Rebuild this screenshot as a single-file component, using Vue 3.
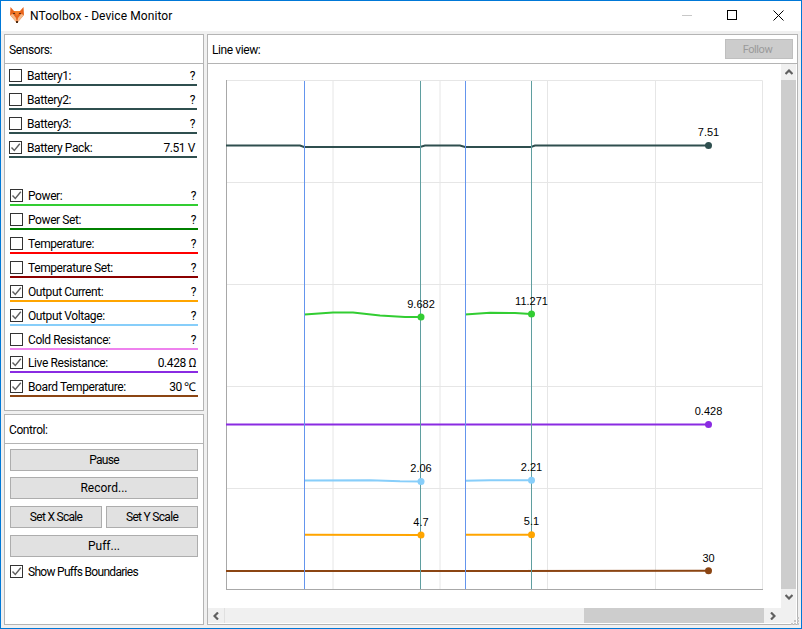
<script setup>
const groupA = [
  { name: 'Battery1:', value: '?', color: '#2f4f4f', on: false },
  { name: 'Battery2:', value: '?', color: '#2f4f4f', on: false },
  { name: 'Battery3:', value: '?', color: '#2f4f4f', on: false },
  { name: 'Battery Pack:', value: '7.51 V', color: '#2f4f4f', on: true },
]
const groupB = [
  { name: 'Power:', value: '?', color: '#32cd32', on: true },
  { name: 'Power Set:', value: '?', color: '#008000', on: false },
  { name: 'Temperature:', value: '?', color: '#ff0000', on: false },
  { name: 'Temperature Set:', value: '?', color: '#8b0000', on: false },
  { name: 'Output Current:', value: '?', color: '#ffa500', on: true },
  { name: 'Output Voltage:', value: '?', color: '#87cefa', on: true },
  { name: 'Cold Resistance:', value: '?', color: '#ee82ee', on: false },
  { name: 'Live Resistance:', value: '0.428 Ω', color: '#8a2be2', on: true, tight: true },
  { name: 'Board Temperature:', value: '30 ℃', color: '#8b4513', on: true },
]
const hGrid = [182, 284, 386, 488]
const vGrid = [333, 440, 547.5, 655.5]
const lines = [
  { c: '#2f4f4f', p: '226,145.5 300,145.5 304,147 420,147 425,145.5 460,145.5 465,147 531,147 535,145.5 708,145.5' },
  { c: '#32cd32', p: '304.5,314.5 333,312.5 353,312.5 380,315.5 405,317 421,317' },
  { c: '#32cd32', p: '465,314.5 490,312.8 515,313 531,314' },
  { c: '#8a2be2', p: '226,424.5 708,424.5' },
  { c: '#87cefa', p: '304.5,480.5 370,480.3 400,481.3 421,481.5' },
  { c: '#87cefa', p: '465,480.7 490,480.2 531,480.2' },
  { c: '#ffa500', p: '304.5,534.7 421,535' },
  { c: '#ffa500', p: '465,534.7 531,534.7' },
  { c: '#8b4513', p: '226,571 708,570.8' },
]
const points = [
  { x: 708.5, y: 145.5, c: '#2f4f4f', t: '7.51', ty: 136 },
  { x: 421, y: 317, c: '#32cd32', t: '9.682', ty: 308 },
  { x: 531.5, y: 314, c: '#32cd32', t: '11.271', ty: 305 },
  { x: 708.5, y: 424.5, c: '#8a2be2', t: '0.428', ty: 415 },
  { x: 421, y: 481.5, c: '#87cefa', t: '2.06', ty: 472 },
  { x: 531.5, y: 480.3, c: '#87cefa', t: '2.21', ty: 471 },
  { x: 421, y: 535, c: '#ffa500', t: '4.7', ty: 526 },
  { x: 531.5, y: 534.7, c: '#ffa500', t: '5.1', ty: 525 },
  { x: 708.5, y: 570.8, c: '#8b4513', t: '30', ty: 562 },
]
</script>

<template>
  <div class="window">
    <header class="titlebar">
      <svg class="fox" width="14" height="16" viewBox="0 0 14 16">
        <polygon points="0.5,0 4,4 10,4 13.5,0 14,8 7,16 0,8" fill="#e8641b" />
        <polygon points="0,8 3,7 6,11 7,16" fill="#f4b98a" />
        <polygon points="14,8 11,7 8,11 7,16" fill="#f4b98a" />
        <polygon points="4,4 10,4 7,9" fill="#f2822c" />
        <rect x="3" y="6" width="2" height="1" fill="#5a2c10" />
        <rect x="9" y="6" width="2" height="1" fill="#5a2c10" />
        <rect x="6" y="14" width="2" height="2" fill="#4a2a12" />
      </svg>
      <span class="title">NToolbox - Device Monitor</span>
      <div class="controls">
        <span class="min"></span>
        <span class="max"></span>
        <svg class="close" width="11" height="11" viewBox="0 0 11 11">
          <path d="M0.5 0.5 L10.5 10.5 M10.5 0.5 L0.5 10.5" stroke="#000" stroke-width="1" fill="none" />
        </svg>
      </div>
    </header>

    <main class="body">
      <aside class="side">
        <section class="panel sensors">
          <div class="phead">Sensors:</div>
          <div class="group first">
            <div v-for="s in groupA" :key="s.name" class="row" :style="{ borderBottomColor: s.color }">
              <span class="box" :class="{ on: s.on }">
                <svg v-if="s.on" width="11" height="11" viewBox="0 0 11 11"><path d="M1.5 5.5 L4.3 8.5 L9.8 1.8" fill="none" stroke="#5f5f5f" stroke-width="1.4" /></svg>
              </span>
              <span class="name">{{ s.name }}</span>
              <span class="val">{{ s.value }}</span>
            </div>
          </div>
          <div class="group second">
            <div v-for="s in groupB" :key="s.name" class="row" :class="{ tight: s.tight }" :style="{ borderBottomColor: s.color }">
              <span class="box" :class="{ on: s.on }">
                <svg v-if="s.on" width="11" height="11" viewBox="0 0 11 11"><path d="M1.5 5.5 L4.3 8.5 L9.8 1.8" fill="none" stroke="#5f5f5f" stroke-width="1.4" /></svg>
              </span>
              <span class="name">{{ s.name }}</span>
              <span class="val">{{ s.value }}</span>
            </div>
          </div>
        </section>

        <section class="panel control">
          <div class="phead">Control:</div>
          <div class="ctrl">
            <button class="btn">Pause</button>
            <button class="btn dots">Record...</button>
            <div class="pair">
              <button class="btn">Set X Scale</button>
              <button class="btn">Set Y Scale</button>
            </div>
            <button class="btn dots">Puff...</button>
            <label class="show">
              <span class="box on">
                <svg width="11" height="11" viewBox="0 0 11 11"><path d="M1.5 5.5 L4.3 8.5 L9.8 1.8" fill="none" stroke="#5f5f5f" stroke-width="1.4" /></svg>
              </span>
              <span class="name">Show Puffs Boundaries</span>
            </label>
          </div>
        </section>
      </aside>

      <section class="panel view">
        <div class="phead vhead">
          <span>Line view:</span>
          <button class="follow" disabled>Follow</button>
        </div>
        <div class="scrollarea">
          <svg class="chart" width="573" height="544" viewBox="208 64 573 544">
            <rect x="226" y="80.5" width="536" height="509" fill="#fff" />
            <path d="M226 80.5 H762.5 V589" fill="none" stroke="#e6e6e6" />
            <line v-for="y in hGrid" :key="'h' + y" x1="226" x2="762" :y1="y + 0.5" :y2="y + 0.5" stroke="#e6e6e6" />
            <line v-for="x in vGrid" :key="'v' + x" :x1="x" :x2="x" y1="80" y2="589" stroke="#e6e6e6" />
            <line x1="226.5" x2="226.5" y1="80" y2="589" stroke="#a8a8a8" />
            <line x1="226" x2="763" y1="589.5" y2="589.5" stroke="#a8a8a8" />
            <polyline v-for="(l, i) in lines" :key="'l' + i" :points="l.p" fill="none" :stroke="l.c" stroke-width="2" />
            <line x1="304.5" x2="304.5" y1="81" y2="589" stroke="#6495ed" />
            <line x1="465.5" x2="465.5" y1="81" y2="589" stroke="#6495ed" />
            <line x1="420.5" x2="420.5" y1="81" y2="589" stroke="#5f9ea0" />
            <line x1="531.5" x2="531.5" y1="81" y2="589" stroke="#5f9ea0" />
            <circle v-for="p in points" :key="'c' + p.t" :cx="p.x" :cy="p.y" r="3.5" :fill="p.c" />
            <text v-for="p in points" :key="'t' + p.t" :x="p.x" :y="p.ty" class="lbl" text-anchor="middle">{{ p.t }}</text>
          </svg>
          <div class="vbar">
            <span class="sbtn"><svg width="8" height="6" viewBox="0 0 8 6"><path d="M0.5 5 L4 1.5 L7.5 5" fill="none" stroke="#606060" stroke-width="2.2" /></svg></span>
            <span class="vthumb"></span>
            <span class="sbtn low"><svg width="8" height="6" viewBox="0 0 8 6"><path d="M0.5 1 L4 4.5 L7.5 1" fill="none" stroke="#606060" stroke-width="2.2" /></svg></span>
          </div>
          <div class="hbar">
            <span class="hbtn lead"><svg width="6" height="8" viewBox="0 0 6 8"><path d="M5 0.5 L1.5 4 L5 7.5" fill="none" stroke="#606060" stroke-width="2.2" /></svg></span>
            <span class="htrack"></span>
            <span class="hthumb"></span>
            <span class="hbtn"><svg width="6" height="8" viewBox="0 0 6 8"><path d="M1 0.5 L4.5 4 L1 7.5" fill="none" stroke="#606060" stroke-width="2.2" /></svg></span>
          </div>
          <div class="corner"></div>
        </div>
      </section>
    </main>
    <svg class="grip" width="9" height="9" viewBox="0 0 9 9">
      <path d="M6 0h2v2h-2z M3 3h2v2h-2z M6 3h2v2h-2z M0 6h2v2h-2z M3 6h2v2h-2z M6 6h2v2h-2z" fill="#c4c4c4" />
    </svg>
  </div>
</template>

<style>
html, body { margin: 0; padding: 0; background: #f0f0f0; overflow: hidden; }
</style>

<style scoped>
.window {
  position: relative;
  width: 802px;
  height: 629px;
  box-sizing: border-box;
  border: 1px solid #0078d7;
  background: #f0f0f0;
  display: flex;
  flex-direction: column;
  font-family: Roboto, "Open Sans", sans-serif;
  font-size: 12px;
  color: #000;
}
.titlebar {
  height: 30px;
  flex: none;
  background: #fff;
  display: flex;
  align-items: center;
  padding-left: 9px;
}
.fox { flex: none; margin-bottom: 2px; }
.title { margin-left: 6px; font-size: 12px; letter-spacing: 0.08px; }
.controls { margin-left: auto; display: flex; align-items: center; margin-bottom: 2px; }
.min { width: 10px; height: 1px; background: #c8c8c8; margin-right: 35px; }
.max { width: 8px; height: 8px; border: 1px solid #000; margin-right: 36px; }
.close { margin-right: 17px; display: block; }
.body {
  flex: 1;
  min-height: 0;
  display: flex;
  gap: 3px;
  padding: 3px;
}
.side { width: 200px; flex: none; display: flex; flex-direction: column; gap: 3px; }
.panel { background: #fff; border: 1px solid #b4b4b4; box-sizing: border-box; }
.phead {
  height: 29px;
  box-sizing: border-box;
  border-bottom: 1px solid #b4b4b4;
  padding: 2px 0 0 4px;
  display: flex;
  align-items: center;
  letter-spacing: -0.4px;
}
.sensors { height: 377px; flex: none; }
.group.first { margin-top: -2px; padding: 0 6px 0 4px; }
.group.second { margin-top: 24px; padding: 0 5px 0 5px; }
.row {
  height: 24px;
  box-sizing: border-box;
  border-bottom: 2px solid #000;
  display: flex;
  align-items: flex-end;
  padding: 0 2px 2px 0;
  line-height: 13px;
  letter-spacing: -0.4px;
}
.row .name, .row .val { margin-bottom: -1px; }
.row.tight { margin-top: -1px; }
.box {
  width: 11px;
  height: 11px;
  border: 1px solid #333;
  background: #fff;
  flex: none;
  display: block;
}
.box svg { display: block; }
.name { margin-left: 5px; white-space: nowrap; }
.val { margin-left: auto; }
.control { flex: 1; min-height: 0; }
.ctrl { display: flex; flex-direction: column; padding: 5px 5px 0 5px; }
.btn {
  height: 22px;
  box-sizing: border-box;
  border: 1px solid #adadad;
  background: #e1e1e1;
  font: inherit;
  color: #000;
  padding: 0;
  margin-bottom: 6px;
  flex: none;
  letter-spacing: -0.7px;
}
.btn.dots { letter-spacing: 0; }
.pair { display: grid; grid-template-columns: 1fr 1fr; gap: 4px; margin: 1px 0 1px; }
.show { display: flex; align-items: center; margin-top: 1px; line-height: 13px; letter-spacing: -0.7px; }
.show .name { padding-top: 2px; }
.view { flex: 1; min-width: 0; display: flex; flex-direction: column; }
.vhead { justify-content: space-between; padding-right: 4px; flex: none; }
.follow {
  width: 68px;
  height: 20px;
  margin-top: -2px;
  box-sizing: border-box;
  border: 1px solid #bfbfbf;
  background: #cccccc;
  color: #9a9a9a;
  font: inherit;
  font-size: 11px;
  letter-spacing: -0.4px;
  padding: 0 3px 0 0;
}
.scrollarea {
  flex: 1;
  min-height: 0;
  display: grid;
  grid-template-columns: 573px 16px;
  grid-template-rows: 544px 16px;
  background: #fff;
}
.chart { display: block; }
.lbl { font-family: "Liberation Sans", Arial, sans-serif; font-size: 11px; fill: #000; }
.vbar { display: flex; flex-direction: column; background: #f0f0f0; margin-right: 1px; }
.sbtn { height: 16px; flex: none; display: flex; align-items: center; justify-content: center; }
.sbtn.low { height: 19px; padding-bottom: 3px; box-sizing: border-box; }
.vthumb { flex: 1; background: #cdcdcd; }
.hbar { display: flex; background: #f0f0f0; margin-bottom: 1px; }
.hbtn { width: 17px; box-sizing: border-box; flex: none; display: flex; align-items: center; justify-content: center; }
.hbtn.lead { border-right: 1px solid #e0e0e0; }
.htrack { width: 359px; flex: none; }
.hthumb { flex: 1; background: #cdcdcd; }
.corner { background: #f0f0f0; margin: 0 1px 1px 0; }
.grip { position: absolute; right: 1px; bottom: 2px; display: block; }
</style>
